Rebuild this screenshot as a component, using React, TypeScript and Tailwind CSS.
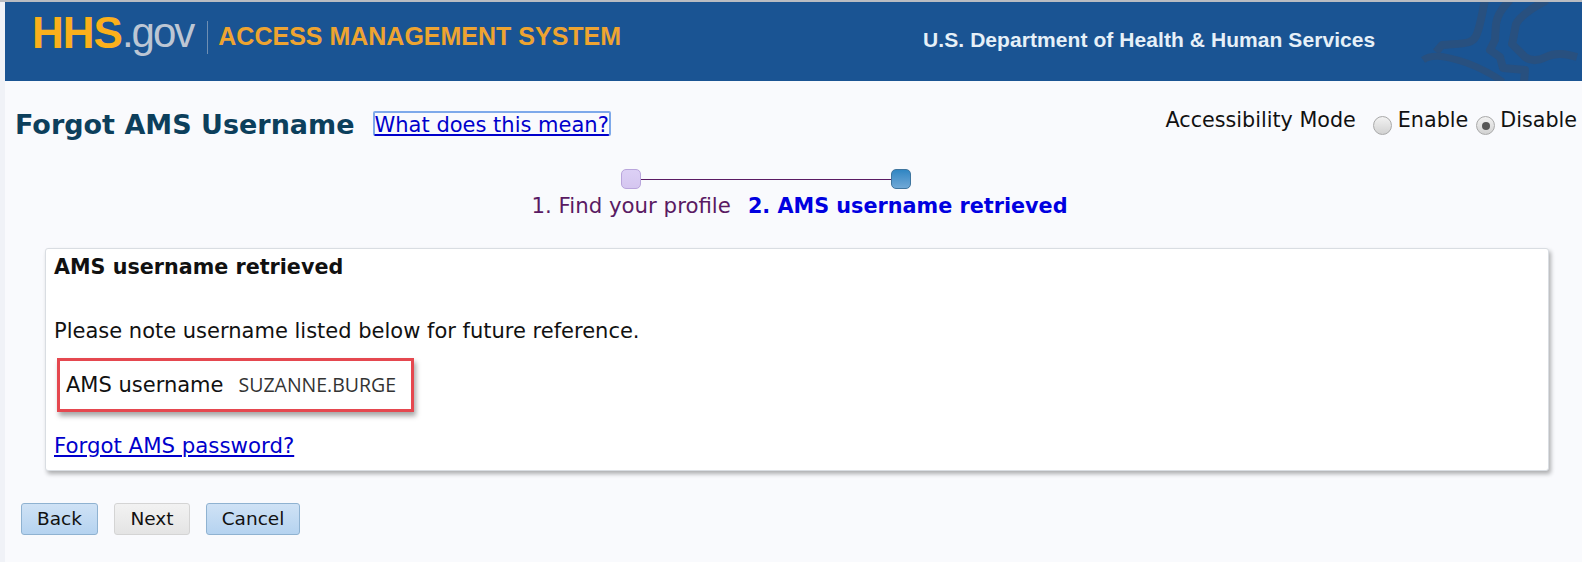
import React from "react";

const buttonBlue = "h-[32px] rounded-[3px] border border-[#8fb2d1] bg-gradient-to-b from-[#cfe2f5] to-[#b5d3f0] pb-[1px] text-[18.5px] text-[#111]";

function Radio({ checked }: { checked?: boolean }) {
	return (
		<span className="mt-[9px] flex h-[19px] w-[19px] items-center justify-center rounded-full border border-[#a9a9a9] bg-gradient-to-b from-[#f2f2f2] to-[#d2d2d2]">
			{checked ? <span className="h-[8px] w-[8px] rounded-full bg-[#555]"></span> : null}
		</span>
	);
}

function HhsMark() {
	return (
		<svg className="h-[79px] w-[181px]" viewBox="0 2 181 79" fill="none" stroke="#28507f" strokeWidth="8" strokeLinejoin="round">
			<path d="M85 0 C82 14 80 28 76 36 C72 44 66 43 42 45 L36 52" />
			<path d="M23 60 C30 55 40 54 67 63 C80 68 92 74 103 82" strokeWidth="7" />
			<path d="M110 0 C102 8 97 16 96 24 L95 40 L90 50 L100 57 L103 68 L125 70 L124 82" />
			<path d="M147 0 C132 8 120 16 116 24 L113 40 L112 44 L125 57 C132 62 140 60 146 57 C156 52 166 54 177 57" />
		</svg>
	);
}

export default function App() {
	return (
		<div className="h-[562px] w-[1582px] overflow-hidden border-t-2 border-[#b9bcc2] bg-[#f0f2f7] pl-[5px] font-['DejaVu_Sans',sans-serif] text-[#111]">
			<div className="h-full bg-[#f9fafd]">
				<header className="flex h-[79px] items-start overflow-hidden bg-[#1a5493]">
					<div className="flex items-start pl-[27px] font-['Liberation_Sans',sans-serif]">
						<span className="mt-[6px] text-[44px] font-bold leading-[50px] tracking-[-1px] text-[#fbb01c]">HHS</span>
						<span className="mt-[6px] text-[42px] leading-[50px] tracking-[-2px] text-[#bcc6d4]">.gov</span>
						<span className="ml-[14px] mt-[19px] h-[33px] w-px bg-[#6f8fb3]"></span>
						<span className="ml-[10px] mt-[17px] text-[25px] font-bold leading-[34px] text-[#eea431]">ACCESS MANAGEMENT SYSTEM</span>
					</div>
					<div className="ml-[302px] pt-[25px] font-['Liberation_Sans',sans-serif] text-[21px] font-bold leading-[26px] tracking-[0.07px] text-[#e6f0f8]">
						U.S. Department of Health &amp; Human Services
					</div>
					<div className="ml-auto mr-[1px]"><HhsMark /></div>
				</header>

				<div className="flex items-start pl-[10px] pt-[26px]">
					<h1 className="text-[27px] font-bold leading-[36px] text-[#0c3f5c]">Forgot AMS Username</h1>
					<a className="ml-[18px] mt-[4px] rounded-[2px] border-2 border-[#7ea9ea] pt-[3px] text-[21px] leading-[18px] text-[#0000cc] underline" href="#">What does this mean?</a>
					<div className="ml-auto flex items-start pr-[5px] text-[20.7px] leading-[26px]">
						<span>Accessibility Mode</span>
						<span className="ml-[17px]"><Radio /></span>
						<span className="ml-[6px]">Enable</span>
						<span className="ml-[8px]"><Radio checked /></span>
						<span className="ml-[5px]">Disable</span>
					</div>
				</div>

				<div className="flex flex-col items-center pt-[26px]">
					<div className="flex items-center pr-[55px]">
						<span className="h-[20px] w-[20px] rounded-[5px] border border-[#b9a5dc] bg-gradient-to-b from-[#dcd0f5] to-[#d5c6f0]"></span>
						<span className="h-px w-[250px] bg-[#5a1a63]"></span>
						<span className="h-[20px] w-[20px] rounded-[5px] border border-[#3f759f] bg-gradient-to-b from-[#2f86c3] to-[#6fa8d6]"></span>
					</div>
					<div className="mt-[4px] flex pl-[12px] leading-[26px]">
						<span className="text-[21.3px] text-[#5a1a63]">1. Find your profile</span>
						<span className="ml-[17px] text-[20.75px] font-bold text-[#0000e0]">2. AMS username retrieved</span>
					</div>
				</div>

				<section className="ml-[40px] mr-[33px] mt-[29px] h-[223px] rounded-[3px] border border-[#d9dde2] bg-white pl-[8px] shadow-[2px_3px_4px_rgba(0,0,0,0.3)]">
					<h2 className="pt-[5px] text-[20.7px] font-bold leading-[26px]">AMS username retrieved</h2>
					<p className="mt-[38px] text-[21px] leading-[26px]">Please note username listed below for future reference.</p>
					<div className="ml-[3px] mt-[14px] flex h-[54px] w-[357px] items-center border-[3px] border-[#e5484f] pl-[6px] shadow-[2px_4px_5px_rgba(0,0,0,0.35)]">
						<span className="text-[21px] leading-[26px]">AMS username</span>
						<span className="ml-[15px] font-['Open_Sans',sans-serif] text-[19.5px] text-[#333]">SUZANNE.BURGE</span>
					</div>
					<a className="mt-[21px] block text-[21.3px] leading-[26px] text-[#0000cc] underline" href="#">Forgot AMS password?</a>
				</section>

				<div className="ml-[16px] mt-[32px] flex gap-[16px]">
					<button className={`${buttonBlue} w-[77px]`}>Back</button>
					<button className="h-[32px] w-[76px] rounded-[3px] border border-[#d4d4d4] bg-gradient-to-b from-[#f2f2f2] to-[#e4e4e4] pb-[1px] text-[18.5px] text-[#111]">Next</button>
					<button className={`${buttonBlue} w-[94px]`}>Cancel</button>
				</div>
			</div>
		</div>
	);
}
